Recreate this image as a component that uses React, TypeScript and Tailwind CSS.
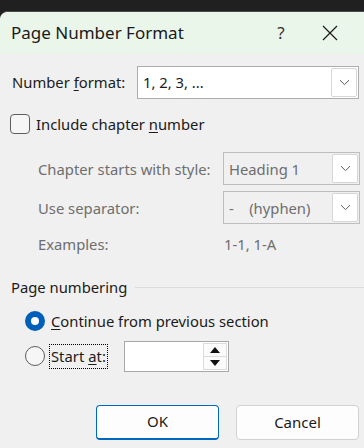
import React from 'react';

const font = { fontFamily: '"Noto Sans", "Open Sans", sans-serif' };

const Chevron = () => (
  <svg width="11" height="7" viewBox="0 0 11 7" fill="none">
    <path d="M1 1.2 L5.5 5.6 L10 1.2" stroke="#5c5c5c" strokeWidth="1" />
  </svg>
);

const Combo = ({ value, disabled }: { value: React.ReactNode; disabled?: boolean }) => (
  <div
    className={`flex h-[33px] items-center border ${
      disabled ? 'border-[#bdbdbd] text-[#6e6e6e]' : 'border-[#adadad] bg-white text-[#1b1b1b]'
    }`}
  >
    <div className="flex-1 truncate pl-[5px]">{value}</div>
    <div className="mr-[1px] flex h-[29px] w-[26px] items-center justify-center rounded-[2px] border border-[#d6d6d6] bg-white">
      <Chevron />
    </div>
  </div>
);

export default function App() {
  return (
    <div className="h-[448px] w-[364px] overflow-hidden bg-[#202020] text-[14.8px] text-[#1b1b1b]" style={font}>
      <div className="mt-[11px] h-[437px] overflow-hidden rounded-tl-[8px] border-t border-[#4a4a4a] bg-[#f0f0f0]">
        {/* Title bar */}
        <div className="flex h-[42px] items-center bg-[#ebf6ea]">
          <div className="flex-1 pl-[11px] text-[17px] text-[#1a1a1a]">Page Number Format</div>
          <div className="w-[30px] text-center text-[17px] text-[#333]">?</div>
          <div className="flex w-[68px] justify-center">
            <svg width="16" height="16" viewBox="0 0 16 16">
              <path d="M1 1 L15 15 M15 1 L1 15" stroke="#1a1a1a" strokeWidth="1.2" />
            </svg>
          </div>
        </div>

        {/* Number format */}
        <div className="mt-[12px] flex items-center pl-[12px] pr-[5px]">
          <div className="w-[125px]">
            Number <span className="underline underline-offset-2">f</span>ormat:
          </div>
          <div className="flex-1">
            <Combo value="1, 2, 3, ..." />
          </div>
        </div>

        {/* Include chapter number */}
        <div className="mt-[14px] flex items-center pl-[10px]">
          <div className="h-[20px] w-[20px] rounded-[4px] border border-[#5d5d5d] bg-[#f6f6f6]" />
          <div className="ml-[6px]">
            Include chapter <span className="underline underline-offset-2">n</span>umber
          </div>
        </div>

        {/* Disabled chapter fields */}
        <div className="mt-[17px] flex flex-col gap-[6px] pl-[38px] pr-[4px] text-[#6e6e6e]">
          <div className="flex items-center">
            <div className="w-[185px]">Chapter starts with style:</div>
            <div className="flex-1">
              <Combo value="Heading 1" disabled />
            </div>
          </div>
          <div className="flex items-center">
            <div className="w-[185px]">Use separator:</div>
            <div className="flex-1">
              <Combo value={<span className="whitespace-pre">-    (hyphen)</span>} disabled />
            </div>
          </div>
          <div className="flex h-[27px] items-center">
            <div className="w-[186px]">Examples:</div>
            <div>1-1, 1-A</div>
          </div>
        </div>

        {/* Page numbering */}
        <div className="mt-[19px] flex items-center pl-[11px]">
          <div>Page numbering</div>
          <div className="ml-[8px] h-px flex-1 bg-[#dcdcdc]" />
        </div>

        <div className="mt-[12px] flex items-center pl-[25px]">
          <div className="flex h-[20px] w-[20px] items-center justify-center rounded-full bg-[#005fb8]">
            <div className="h-[8px] w-[8px] rounded-full bg-white" />
          </div>
          <div className="ml-[6px]">
            <span className="underline underline-offset-2">C</span>ontinue from previous section
          </div>
        </div>

        <div className="mt-[8px] flex items-center pl-[25px]">
          <div className="h-[20px] w-[20px] rounded-full border border-[#5d5d5d] bg-[#f6f6f6]" />
          <div className="ml-[4px] flex h-[25px] items-center border border-dotted border-black px-[1px]">
            Start <span className="ml-[4px] underline underline-offset-2">a</span>t:
          </div>
          <div className="ml-[16px] flex h-[31px] w-[105px] items-center justify-end border border-[#a8a8a8] bg-white pr-[1px]">
            <div className="flex h-[27px] w-[24px] flex-col border border-[#dcdcdc] bg-[#fbfbfb]">
              <div className="flex flex-1 items-center justify-center border-b border-[#dcdcdc]">
                <svg width="10" height="6" viewBox="0 0 10 6">
                  <path d="M0 6 L5 0 L10 6 Z" fill="#111" />
                </svg>
              </div>
              <div className="flex flex-1 items-center justify-center">
                <svg width="10" height="6" viewBox="0 0 10 6">
                  <path d="M0 0 L10 0 L5 6 Z" fill="#111" />
                </svg>
              </div>
            </div>
          </div>
        </div>

        {/* Buttons */}
        <div className="mt-[33px] flex justify-end gap-[17px] pr-[5px]">
          <button className="h-[35px] w-[123px] rounded-[4px] border border-[#0067c0] border-b-2 bg-[#fdfdfd] text-[15px] text-[#1b1b1b]">
            OK
          </button>
          <button className="h-[35px] w-[123px] rounded-[4px] border border-[#d1d1d1] bg-[#fdfdfd] text-[15px] text-[#1b1b1b]">
            Cancel
          </button>
        </div>
      </div>
    </div>
  );
}
